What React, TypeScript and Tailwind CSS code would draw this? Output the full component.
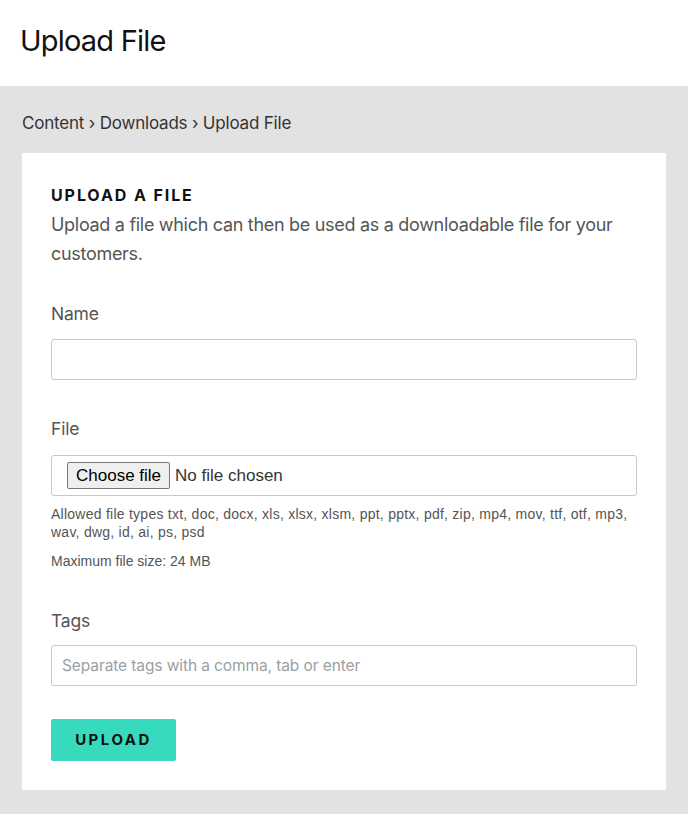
export default function App() {
  const font = { fontFamily: "Inter, 'Noto Sans', sans-serif" };
  const sys = { fontFamily: "'Liberation Sans', Arial, sans-serif" };
  return (
    <div className="min-h-[814px] bg-[#e2e2e2] text-[#1a1a1a]" style={font}>
      <div className="bg-white h-[86px] flex items-center px-5">
        <h1 className="text-[29px] tracking-[-0.8px] text-[#111] font-normal leading-none mb-[6px]">Upload File</h1>
      </div>
      <div className="px-[22px]">
        <div className="h-[67px] pt-[8px] flex items-center text-[17px] text-[#333] tracking-[-0.2px]">
          Content › Downloads › Upload File
        </div>
        <div className="bg-white px-[29px] pt-[32px] pb-[29px]">
          <h2 className="text-[16px] font-bold tracking-[1.9px] text-[#111] leading-[20px]">UPLOAD A FILE</h2>
          <p className="mt-[5px] text-[18px] leading-[29px] text-[#555] tracking-[-0.3px]">
            Upload a file which can then be used as a downloadable file for your customers.
          </p>
          <div className="mt-[34px] text-[17.5px] text-[#555] leading-[24px] tracking-[-0.2px]">Name</div>
          <input className="mt-[13px] block w-full h-[41px] border border-[#c8c8c8] rounded-[3px] outline-none" />
          <div className="mt-[37px] text-[17.5px] text-[#555] leading-[24px] tracking-[-0.2px]">File</div>
          <div className="mt-[14px] h-[41px] border border-[#c8c8c8] rounded-[3px] flex items-center px-[15px]" style={sys}>
            <span className="h-[27px] px-[8px] flex items-center border border-[#767676] rounded-[2px] bg-[#efefef] text-[17px] text-black">Choose file</span>
            <span className="ml-[5px] text-[17px] text-[#333]">No file chosen</span>
          </div>
          <p className="mt-[9px] text-[14px] tracking-[0.25px] leading-[18px] text-[#555]" style={sys}>
            Allowed file types txt, doc, docx, xls, xlsx, xlsm, ppt, pptx, pdf, zip, mp4, mov, ttf, otf, mp3, wav, dwg, id, ai, ps, psd
          </p>
          <p className="mt-[11px] text-[14px] leading-[18px] text-[#555]" style={sys}>
            Maximum file size: 24 MB
          </p>
          <div className="mt-[39px] text-[17.5px] text-[#555] leading-[24px] tracking-[-0.2px]">Tags</div>
          <input
            placeholder="Separate tags with a comma, tab or enter"
            className="mt-[12px] block w-full h-[41px] border border-[#c8c8c8] rounded-[3px] outline-none px-[10px] text-[15.5px] tracking-[-0.1px] placeholder:text-[#9aa0a4]"
          />
          <button className="mt-[33px] w-[125px] h-[42px] bg-[#38dabe] rounded-[2px] text-[15px] font-bold tracking-[2.5px] text-[#111] block">
            UPLOAD
          </button>
        </div>
      </div>
    </div>
  );
}
